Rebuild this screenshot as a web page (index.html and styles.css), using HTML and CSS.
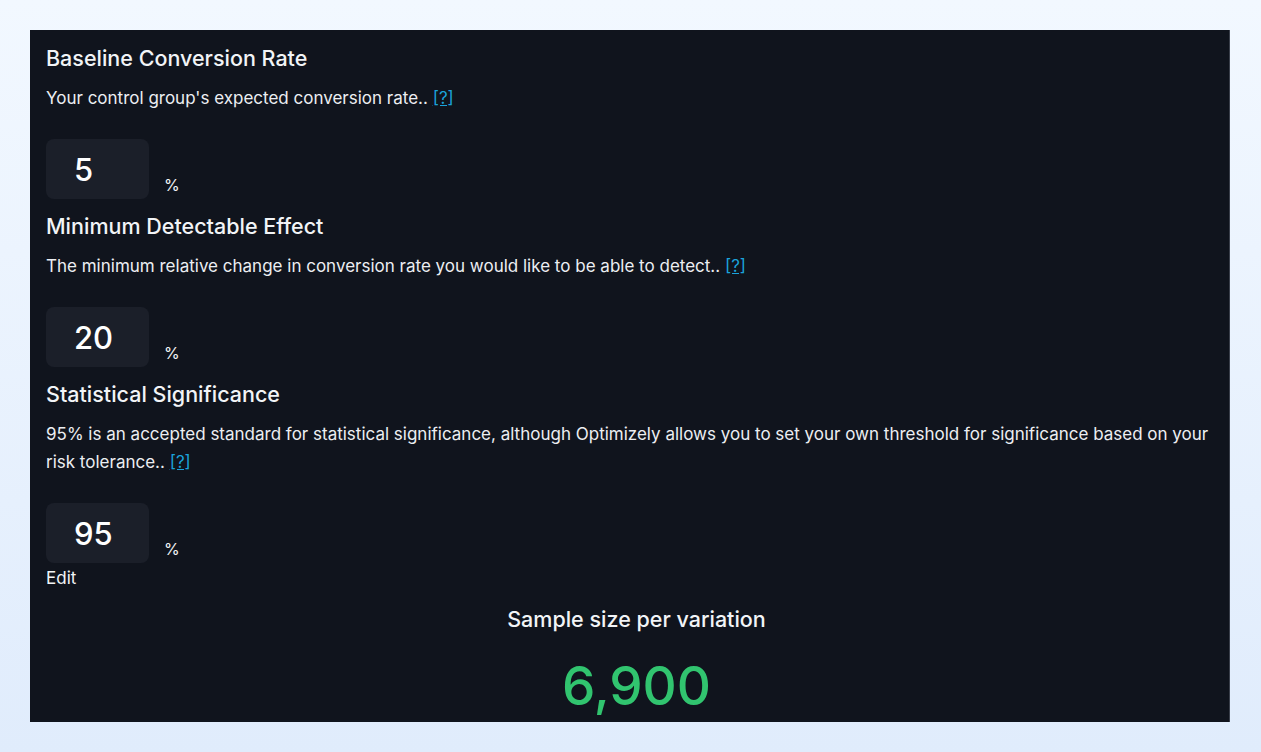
FILE: index.html
```html
<!DOCTYPE html>
<html lang="en">
<head>
  <meta charset="UTF-8" />
  <meta name="viewport" content="width=device-width, initial-scale=1.0"/>
  <title>Sample Size Calculator</title>
  <link rel="stylesheet" href="styles.css">
</head>
<body>
  <div class="panel">
    <div class="field">
      <h3>Baseline Conversion Rate</h3>
      <p class="desc">Your control group's expected conversion rate.. <a href="#">[?]</a></p>
      <div class="input-row">
        <input type="text" class="num" value="5" />
        <span class="unit">%</span>
      </div>
    </div>

    <div class="field">
      <h3>Minimum Detectable Effect</h3>
      <p class="desc">The minimum relative change in conversion rate you would like to be able to detect.. <a href="#">[?]</a></p>
      <div class="input-row">
        <input type="text" class="num" value="20" />
        <span class="unit">%</span>
      </div>
    </div>

    <div class="field">
      <h3>Statistical Significance</h3>
      <p class="desc">95% is an accepted standard for statistical significance, although Optimizely allows you to set your own threshold for significance based on your risk tolerance.. <a href="#">[?]</a></p>
      <div class="input-row last">
        <input type="text" class="num" value="95" />
        <span class="unit">%</span>
      </div>
    </div>

    <div class="edit">Edit</div>

    <div class="result">
      <h3>Sample size per variation</h3>
      <div class="result-value">6,900</div>
    </div>
  </div>
</body>
</html>
```

FILE: styles.css
```css
* {
  margin: 0;
  padding: 0;
  box-sizing: border-box;
  font-family: 'Inter', 'Noto Sans', sans-serif;
}

body {
  background: linear-gradient(180deg, #f2f8ff 0%, #e0ecfc 100%);
  min-height: 100vh;
  padding: 30px 31px 30px 30px;
}

.panel {
  background-color: #10141d;
  border-right: 1px solid #3a3f4a;
  height: calc(100vh - 60px);
  overflow: hidden;
  padding: 16px 16px 0;
  color: #f2f4f7;
}

h3 {
  font-size: 21.5px;
  font-weight: 500;
  line-height: 24px;
}

.desc {
  margin-top: 14px;
  font-size: 17px;
  line-height: 28px;
  color: #eceef2;
}

.desc a {
  color: #1ba3dc;
}

.input-row {
  display: flex;
  align-items: flex-end;
  gap: 15px;
  margin-top: 27px;
  margin-bottom: 15px;
}

.input-row.last {
  margin-bottom: 3px;
}

.num {
  width: 103px;
  height: 60px;
  background-color: #1b1f29;
  border: none;
  border-radius: 8px;
  padding-left: 28px;
  font-size: 31px;
  font-weight: 500;
  color: #ffffff;
  outline: none;
}

.unit {
  font-size: 16px;
  line-height: 20px;
  padding-bottom: 4px;
}

.edit {
  font-size: 17px;
  line-height: 24px;
}

.result {
  text-align: center;
  margin-top: 17px;
  padding-left: 14px;
}

.result-value {
  margin-top: 23px;
  font-size: 53px;
  font-weight: 500;
  line-height: 64px;
  color: #31c46f;
}
```
